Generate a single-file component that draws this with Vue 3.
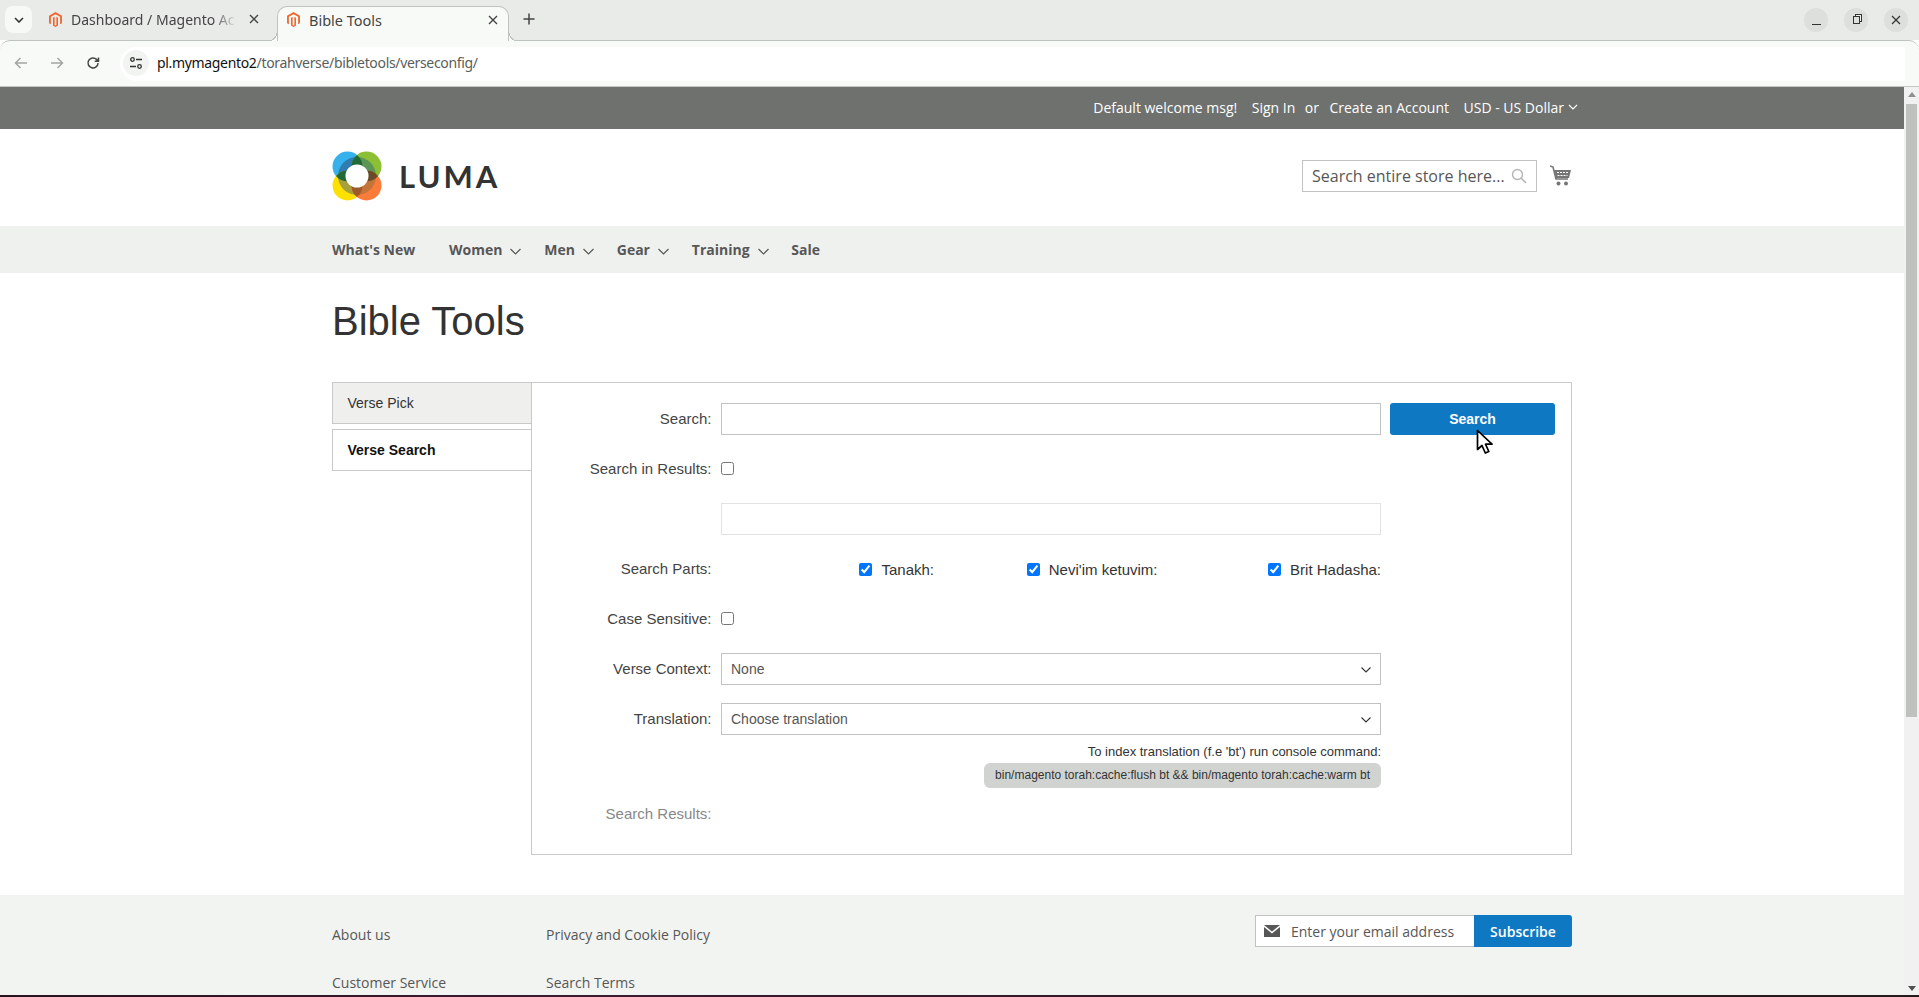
<script setup>
const navItems = [
  { label: "What's New", caret: false, wide: true },
  { label: 'Women', caret: true },
  { label: 'Men', caret: true },
  { label: 'Gear', caret: true },
  { label: 'Training', caret: true },
  { label: 'Sale', caret: false }
]
const parts = ['Tanakh:', "Nevi'im ketuvim:", 'Brit Hadasha:']
const magento = 'M12 0 1.7 6v12l2.9 1.7V7.7L12 3.4l7.4 4.3v12l2.9-1.7V6zM13.4 20.6l-1.4.8-1.4-.8V7.7L8 9.2v12.5l4 2.3 4-2.3V9.2l-2.6-1.5z'
</script>

<template>
  <div class="window">
    <div class="tabstrip">
      <button class="tablist"><svg width="10" height="6" viewBox="0 0 10 6"><path d="M1 1l4 4 4-4" fill="none" stroke="#333" stroke-width="1.6"/></svg></button>
      <div class="tab">
        <svg class="fav" viewBox="0 0 24 24"><path :d="magento" fill="#ee672f"/></svg>
        <span class="tab-title fade">Dashboard / Magento Ac</span>
        <svg class="tab-x" width="10" height="10" viewBox="0 0 10 10"><path d="M1 1l8 8M9 1l-8 8" stroke="#444" stroke-width="1.400"/></svg>
      </div>
      <div class="tab active">
        <svg class="fav" viewBox="0 0 24 24"><path :d="magento" fill="#ee672f"/></svg>
        <span class="tab-title">Bible Tools</span>
        <svg class="tab-x" width="10" height="10" viewBox="0 0 10 10"><path d="M1 1l8 8M9 1l-8 8" stroke="#444" stroke-width="1.400"/></svg>
      </div>
      <svg class="plus" width="12" height="12" viewBox="0 0 12 12"><path d="M6 .5v11M.5 6h11" stroke="#444" stroke-width="1.500"/></svg>
      <div class="winctl">
        <span class="wbtn"><i class="w-min"></i></span>
        <span class="wbtn"><i class="w-max"></i></span>
        <span class="wbtn"><svg width="10" height="10" viewBox="0 0 10 10"><path d="M1 1l8 8M9 1l-8 8" stroke="#333" stroke-width="1.200"/></svg></span>
      </div>
    </div>

    <div class="toolbar">
      <svg class="tool-ic" width="16" height="16" viewBox="0 0 16 16"><path d="M14 8H3M7.500 3 2.500 8l5 5" fill="none" stroke="#a3a6a3" stroke-width="1.500"/></svg>
      <svg class="tool-ic" width="16" height="16" viewBox="0 0 16 16"><path d="M2 8h11M8.500 3l5 5-5 5" fill="none" stroke="#a3a6a3" stroke-width="1.500"/></svg>
      <svg class="tool-ic" width="16" height="16" viewBox="0 0 16 16"><path d="M13 8a5 5 0 1 1-1.500-3.600L13.500 6.300M13.500 2.500v3.800H9.700" fill="none" stroke="#444" stroke-width="1.500"/></svg>
      <div class="omnibox">
        <span class="tune"><svg width="14" height="14" viewBox="0 0 14 14"><circle cx="3.500" cy="3.500" r="1.800" fill="none" stroke="#333" stroke-width="1.300"/><path d="M7 3.500h6M1 10.500h6" stroke="#333" stroke-width="1.300"/><circle cx="10.500" cy="10.500" r="1.800" fill="none" stroke="#333" stroke-width="1.300"/></svg></span>
        <span class="url"><b>pl.mymagento2</b>/torahverse/bibletools/verseconfig/</span>
      </div>
    </div>

    <div class="viewport">
      <div class="page">
        <div class="panel-top">
          <div class="wrap panel-links">
            <span>Default welcome msg!</span>
            <span>Sign In</span>
            <span class="or">or</span>
            <span>Create an Account</span>
            <span class="currency">USD - US Dollar<svg width="10" height="6" viewBox="0 0 10 6"><path d="M1 1l4 4 4-4" fill="none" stroke="#fff" stroke-width="1.200"/></svg></span>
          </div>
        </div>

        <header class="wrap header">
          <div class="logo">
            <svg width="50" height="50" viewBox="0 0 50 50">
              <defs>
                <clipPath id="cB"><circle cx="15.500" cy="15.500" r="15"/></clipPath>
                <clipPath id="cG"><circle cx="34.500" cy="15.500" r="15"/></clipPath>
                <clipPath id="cY"><circle cx="15.500" cy="34.500" r="15"/></clipPath>
                <clipPath id="cO"><circle cx="34.500" cy="34.500" r="15"/></clipPath>
              </defs>
              <circle cx="15.500" cy="15.500" r="15" fill="#36b1ec"/>
              <circle cx="34.500" cy="15.500" r="15" fill="#8dbf35"/>
              <circle cx="15.500" cy="34.500" r="15" fill="#ffe100"/>
              <circle cx="34.500" cy="34.500" r="15" fill="#fb7b3a"/>
              <circle cx="25" cy="25" r="19" fill="#2f7cb3" clip-path="url(#cB)"/>
              <circle cx="25" cy="25" r="19" fill="#5b9656" clip-path="url(#cG)"/>
              <circle cx="25" cy="25" r="19" fill="#a8a03a" clip-path="url(#cY)"/>
              <circle cx="25" cy="25" r="19" fill="#c4743a" clip-path="url(#cO)"/>
              <circle cx="34.500" cy="15.500" r="15" fill="#226a35" clip-path="url(#cB)"/>
              <circle cx="15.500" cy="34.500" r="15" fill="#226a35" clip-path="url(#cB)"/>
              <circle cx="34.500" cy="34.500" r="15" fill="#6b4a27" clip-path="url(#cG)"/>
              <circle cx="34.500" cy="34.500" r="15" fill="#a05a2a" clip-path="url(#cY)"/>
              <circle cx="25" cy="25" r="11.500" fill="#fff"/>
            </svg>
            <span class="logo-text">LUMA</span>
          </div>
          <div class="header-right">
            <div class="store-search">
              <input class="store-input" type="text" placeholder="Search entire store here..." />
              <svg class="store-ic" width="16" height="16" viewBox="0 0 16 16"><circle cx="6.500" cy="6.500" r="5" fill="none" stroke="#b5b5b5" stroke-width="1.400"/><path d="M10.200 10.200 15 15" stroke="#b5b5b5" stroke-width="1.600"/></svg>
            </div>
            <svg class="cart" width="21" height="22" viewBox="0 0 21 22">
              <path d="M0 1l3 1 3 12h12" fill="none" stroke="#757575" stroke-width="1.600"/>
              <path d="M4 5h17l-2 8H6z" fill="#757575"/>
              <path d="M7 7.500h12M7.500 10.500h10" stroke="#fff" stroke-width="1" stroke-dasharray="2 1"/>
              <circle cx="8.500" cy="18.500" r="2" fill="#757575"/>
              <circle cx="16" cy="18.500" r="2" fill="#757575"/>
            </svg>
          </div>
        </header>

        <nav class="nav">
          <div class="wrap nav-row">
            <span v-for="item in navItems" :key="item.label" class="nav-item" :class="{ wide: item.wide }">
              {{ item.label }}
              <svg v-if="item.caret" width="11" height="7" viewBox="0 0 11 7"><path d="M.500 1l5 5 5-5" fill="none" stroke="#575757" stroke-width="1.200"/></svg>
            </span>
          </div>
        </nav>

        <main class="wrap main">
          <h1 class="title">Bible Tools</h1>
          <div class="tool">
            <div class="tool-tabs">
              <div class="tool-tab">Verse Pick</div>
              <div class="tool-tab current">Verse Search</div>
            </div>
            <div class="tool-body">
              <label class="lbl">Search:</label>
              <input class="field" type="text" />
              <button class="search-btn">Search</button>

              <label class="lbl">Search in Results:</label>
              <div class="ctl"><input class="check" type="checkbox" /></div>
              <span></span>

              <span></span>
              <input class="field faded" type="text" disabled />
              <span></span>

              <label class="lbl">Search Parts:</label>
              <div class="parts">
                <label v-for="p in parts" :key="p" class="part"><input class="check" type="checkbox" checked />{{ p }}</label>
              </div>
              <span></span>

              <label class="lbl">Case Sensitive:</label>
              <div class="ctl"><input class="check" type="checkbox" /></div>
              <span></span>

              <label class="lbl">Verse Context:</label>
              <div class="select-wrap">
                <select class="field sel"><option>None</option></select>
                <svg class="sel-arrow" width="10" height="6" viewBox="0 0 10 6"><path d="M.500 .500 5 5l4.500-4.500" fill="none" stroke="#333" stroke-width="1.100"/></svg>
              </div>
              <span></span>

              <label class="lbl">Translation:</label>
              <div class="select-wrap">
                <select class="field sel"><option>Choose translation</option></select>
                <svg class="sel-arrow" width="10" height="6" viewBox="0 0 10 6"><path d="M.500 .500 5 5l4.500-4.500" fill="none" stroke="#333" stroke-width="1.100"/></svg>
              </div>
              <span></span>

              <span></span>
              <div class="note">
                <div class="note-text">To index translation (f.e 'bt') run console command:</div>
                <code class="pill">bin/magento torah:cache:flush bt &amp;&amp; bin/magento torah:cache:warm bt</code>
              </div>
              <span></span>

              <label class="lbl results">Search Results:</label>
            </div>
          </div>
        </main>

        <footer class="footer">
          <div class="wrap footer-row">
            <div class="foot-cols">
              <div class="foot-col"><span>About us</span><span>Customer Service</span></div>
              <div class="foot-col"><span>Privacy and Cookie Policy</span><span>Search Terms</span></div>
            </div>
            <div class="subscribe">
              <div class="email">
                <svg width="16" height="12" viewBox="0 0 16 12"><path d="M0 0h16L8 6.500z" fill="#575757"/><path d="M0 2l8 6.500L16 2v10H0z" fill="#575757"/></svg>
                <input class="email-input" type="text" placeholder="Enter your email address" />
              </div>
              <button class="sub-btn">Subscribe</button>
            </div>
          </div>
        </footer>
      </div>

      <div class="scrollbar">
        <i class="sb-up"></i>
        <div class="sb-track"><div class="sb-thumb"></div></div>
        <i class="sb-down"></i>
      </div>
    </div>
    <div class="wallpaper"></div>

    <svg class="cursor" width="18" height="26" viewBox="0 0 18 26"><path d="M1.500 1.500v19l4.500-4 3.300 7.500 3.500-1.500-3.300-7.300H16z" fill="#fff" stroke="#000" stroke-width="1.700" stroke-linejoin="round"/></svg>
  </div>
</template>

<style>
html, body { margin: 0; overflow: hidden; background: #fff; }
</style>

<style scoped>
.window { position: relative; width: 1919px; height: 997px; overflow: hidden; display: flex; flex-direction: column; font-family: "Open Sans", sans-serif; }

.tabstrip { height: 40px; flex: none; background: #e9ebe9; display: flex; align-items: flex-start; position: relative; font-family: "Noto Sans", sans-serif; }
.tablist { width: 27px; height: 27px; margin: 6px 0 0 5px; padding: 0; border: 0; border-radius: 8px; background: #f7f9f7; display: flex; align-items: center; justify-content: center; }
.tab { width: 240px; height: 28px; margin: 6px 0 0 0; padding: 0 0 2px 16px; display: flex; align-items: center; box-sizing: border-box; color: #444; font-size: 14.500px; flex: none; }
.tab.active { position: relative; z-index: 2; width: 232px; height: 35px; margin: 6px 0 0 5px; padding: 0 0 9px 8px; background: #f8faf8; border: 1px solid #bfc3bf; border-bottom: 0; border-radius: 10px 10px 0 0; }
.tab.active::before, .tab.active::after { content: ""; position: absolute; bottom: 0; width: 8px; height: 8px; }
.tab.active::before { left: -9px; background: radial-gradient(circle at 0 0, transparent 7px, #bfc3bf 7px, #bfc3bf 8px, #f8faf8 8px); }
.tab.active::after { right: -9px; background: radial-gradient(circle at 100% 0, transparent 7px, #bfc3bf 7px, #bfc3bf 8px, #f8faf8 8px); }
.fav { width: 15px; height: 15px; flex: none; }
.tab-title { margin-left: 8px; flex: 1; white-space: nowrap; }
.fade { -webkit-mask-image: linear-gradient(90deg, #000 85%, transparent); mask-image: linear-gradient(90deg, #000 85%, transparent); flex: none; width: 166px; overflow: hidden; font-size: 14px; }
.tab-x { margin: 0 10px 0 12px; flex: none; }
.plus { margin: 13px 0 0 14px; }
.winctl { position: absolute; right: 11px; top: 8px; display: flex; gap: 16px; }
.wbtn { width: 24px; height: 24px; border-radius: 50%; background: #dcdfdc; display: flex; align-items: center; justify-content: center; }
.w-min { display: block; width: 9px; height: 1px; background: #333; margin-top: 8px; }
.w-max { display: block; width: 5px; height: 6px; border: 1px solid #333; box-shadow: 2px -2px 0 -1px #f0f0f0, 2px -2px 0 0 #333; }

.toolbar { height: 47px; flex: none; box-sizing: border-box; background: #f8faf8; border-top: 1px solid #bfc3bf; border-bottom: 1px solid #c4c7c4; border-radius: 10px 10px 0 0; display: flex; align-items: center; padding: 0 14px 0 13px; }
.tool-ic { margin: -2px 20px 0 0; flex: none; }
.omnibox { flex: 1; height: 34px; box-sizing: border-box; background: #fff; border-radius: 17px 0 0 17px; margin-left: -1px; display: flex; align-items: center; padding: 0 0 2px 3px; }
.tune { width: 26px; height: 26px; border-radius: 50%; background: #f2f4f2; display: flex; align-items: center; justify-content: center; }
.url { margin-left: 8px; font-family: "Noto Sans", sans-serif; font-size: 14px; color: #5a5e5a; letter-spacing: -.33px; }
.url b { font-weight: 400; color: #111; }

.viewport { flex: 1; display: flex; min-height: 0; }
.page { flex: 1; min-width: 0; overflow: hidden; color: #333; }
.wrap { width: 1240px; margin: 0 auto; }

.panel-top { height: 42px; background: #6e716e; }
.panel-links { height: 40px; padding-bottom: 2px; display: flex; align-items: center; justify-content: flex-end; gap: 14.500px; color: #fff; font-size: 14px; position: relative; left: 6px; }
.or { margin: 0 -4px 0 -5px; }
.currency { display: flex; align-items: center; gap: 4px; }

.header { height: 97px; display: flex; align-items: center; justify-content: space-between; }
.logo { display: flex; align-items: center; gap: 17px; margin-top: -3px; }
.logo-text { font-family: Lato, sans-serif; font-weight: 700; font-size: 31px; letter-spacing: 3px; color: #333; }
.header-right { display: flex; align-items: flex-start; gap: 13px; margin: -3px 1px 0 0; }
.store-search { position: relative; width: 235px; height: 32px; }
.store-input { width: 100%; height: 100%; box-sizing: border-box; border: 1px solid #c2c2c2; padding: 0 25px 0 9px; font: 400 16px "Open Sans", sans-serif; color: #575757; outline: 0; background: #fff; }
.store-input::placeholder { color: #575757; opacity: 1; }
.store-ic { position: absolute; right: 10px; top: 8px; }
.cart { margin-top: 5px; }

.nav { height: 47px; background: #eff1ef; }
.nav-row { height: 47px; display: flex; align-items: center; gap: 22.800px; }
.nav-item { font-size: 14px; font-weight: 700; color: #575757; display: flex; align-items: center; gap: 8px; white-space: nowrap; }
.nav-item svg { margin-top: 3px; }
.nav-item.wide { margin-right: 11px; }

.title { margin: 0 0 37px; padding-top: 24px; font: 400 40px/48px "Liberation Sans", Arial, sans-serif; color: #333; height: 48px; }
.tool { display: flex; font-family: "Liberation Sans", Arial, sans-serif; align-items: flex-start; }
.tool-tabs { width: 199px; flex: none; display: flex; flex-direction: column; gap: 5px; }
.tool-tab { height: 42px; box-sizing: border-box; border: 1px solid #c9c9c9; border-right: 0; padding-left: 14.500px; background: #eff0ee; display: flex; align-items: center; font-size: 14px; color: #333; }
.tool-tab.current { background: #fff; font-weight: 700; color: #111; }
.tool-body { flex: 1; box-sizing: border-box; border: 1px solid #c9c9c9; padding: 20px 15px 31px 0; display: grid; grid-template-columns: 180px 660px 165px; column-gap: 9px; row-gap: 18px; align-items: center; height: 473px; align-content: start; }
.lbl { font-size: 15px; text-align: right; color: #444; line-height: 32px; padding-right: .5px; }
.field { width: 100%; height: 32px; box-sizing: border-box; border: 1px solid #c2c2c2; background: #fff; display: block; outline: 0; }
.field.faded { border-color: #e2e2e2; }
.search-btn { height: 32px; margin-left: 0; border: 0; border-radius: 3px; background: #0f78c3; color: #fff; font: 700 14px "Liberation Sans", Arial, sans-serif; padding: 0; }
.ctl { display: flex; align-items: center; height: 32px; margin-top: -2px; }
.check { width: 13px; height: 13px; margin: 0; flex: none; }
.parts { display: grid; grid-template-columns: repeat(3, 213px); column-gap: 10.500px; justify-items: end; height: 32px; align-items: center; }
.part { display: flex; align-items: center; gap: 9px; font-size: 15px; color: #333; white-space: nowrap; }
.select-wrap { position: relative; height: 32px; }
.sel { appearance: none; -webkit-appearance: none; padding: 0 30px 0 9px; font: 400 14px "Liberation Sans", Arial, sans-serif; color: #555; border-radius: 0; }
.sel-arrow { position: absolute; right: 10px; top: 14px; pointer-events: none; }
.note { margin-top: -10px; display: flex; flex-direction: column; align-items: flex-end; }
.note-text { font-size: 13px; line-height: 18px; color: #333; }
.pill { margin-top: 2px; height: 25px; box-sizing: border-box; padding: 0 11px; border-radius: 6px; background: #d1d3d1; font: 400 12px/25px "Liberation Sans", Arial, sans-serif; color: #333; white-space: nowrap; }
.results { color: #888; line-height: 16px; }

.footer { margin-top: 40px; height: 120px; background: #f2f4f2; font-size: 14px; color: #575757; }
.footer-row { display: flex; justify-content: space-between; align-items: flex-start; padding-top: 20px; }
.foot-cols { display: flex; padding-top: 10px; }
.foot-col { width: 214px; display: flex; flex-direction: column; gap: 28px; line-height: 20px; }
.subscribe { display: flex; height: 32px; }
.email { width: 219px; box-sizing: border-box; border: 1px solid #c2c2c2; border-right: 0; background: #fff; display: flex; align-items: center; padding-left: 8px; gap: 11px; }
.email svg { flex: none; }
.email-input { flex: 1; min-width: 0; height: 100%; border: 0; outline: 0; padding: 0; background: transparent; font: 400 14px "Open Sans", sans-serif; color: #575757; }
.email-input::placeholder { color: #575757; opacity: 1; }
.sub-btn { width: 98px; border: 0; border-radius: 0 3px 3px 0; background: #0f78c3; color: #fff; font: 600 14px "Open Sans", sans-serif; padding: 0; }

.scrollbar { width: 15px; flex: none; background: #f1f1f1; display: flex; flex-direction: column; align-items: center; }
.sb-up { margin: 5px 0 4px; width: 0; height: 0; border: 4px solid transparent; border-top: 0; border-bottom: 5px solid #8f918f; }
.sb-track { flex: 1; width: 100%; display: flex; justify-content: center; }
.sb-thumb { width: 11px; height: 613px; background: #bfc1bf; margin-top: 3px; }
.sb-down { margin: 0 0 4px; width: 0; height: 0; border: 4px solid transparent; border-bottom: 0; border-top: 5px solid #505050; }
.wallpaper { height: 2px; flex: none; background: linear-gradient(90deg, #2a1420, #3a1a30 30%, #251a1c); }
.cursor { position: absolute; left: 1476px; top: 429px; }
</style>
